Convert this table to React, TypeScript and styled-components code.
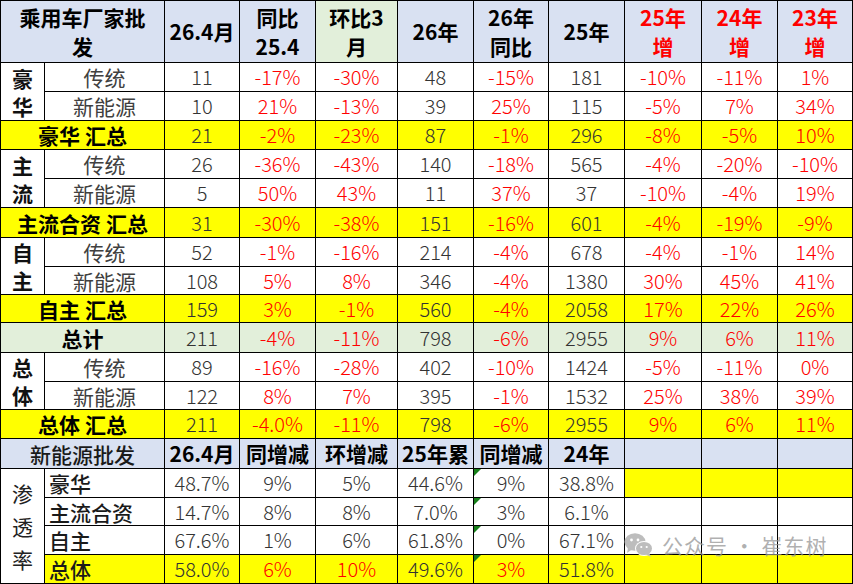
import React from "react";
import styled, { createGlobalStyle } from "styled-components";

const GlobalStyle = createGlobalStyle`
  body {
    margin: 0;
    background: #fff;
  }
`;

const FONT = `"Noto Sans CJK SC", "Noto Sans", sans-serif`;
const BLUE = "#d9e1f2";
const GREEN = "#e2efda";
const YELLOW = "#ffff00";
const RED = "#ff0000";
const INK = "#333333";

const Wrap = styled.div`
  position: relative;
  width: 853px;
  height: 584px;
  overflow: hidden;
`;

const Table = styled.table`
  border-collapse: collapse;
  table-layout: fixed;
  width: 851px;
  font-family: ${FONT};
`;

const Col = styled.col<{ $w: number }>`
  width: ${(p) => p.$w}px;
`;

const Row = styled.tr<{ $h: number; $bg?: string }>`
  height: ${(p) => p.$h}px;
  background: ${(p) => p.$bg || "#fff"};
`;

const Cell = styled.td<{
  $bg?: string;
  $color?: string;
  $align?: string;
}>`
  position: relative;
  border: 1px solid #000;
  padding: 0;
  text-align: ${(p) => p.$align || "center"};
  vertical-align: middle;
  background: ${(p) => p.$bg || "transparent"};
  color: ${(p) => p.$color || INK};
  font-size: 20px;
  font-weight: 300;
  line-height: 22px;
  white-space: nowrap;
  overflow: hidden;
`;

const HeadCell = styled(Cell)`
  font-size: 21px;
  font-weight: 700;
  line-height: 29px;
  color: ${(p) => p.$color || "#000"};
`;

const LabelCell = styled(Cell)`
  font-size: 21px;
  font-weight: 400;
  color: ${(p) => p.$color || "#404040"};
`;

const SubHead = styled(Cell)`
  font-size: 21px;
  font-weight: 500;
  color: #1a1a1a;
`;

const GroupCell = styled(Cell)`
  font-size: 21px;
  font-weight: 700;
  color: #111;
  line-height: 28px;
  white-space: normal;
`;

const SumLabel = styled(Cell)`
  font-size: 21px;
  font-weight: 700;
  color: #000;
`;

const PenLabel = styled(Cell)`
  font-size: 21px;
  font-weight: 500;
  color: #1a1a1a;
  padding-left: 4px;
`;

const VerticalLabel = styled(Cell)`
  font-size: 21px;
  font-weight: 400;
  color: #222;
  line-height: 33px;
  white-space: normal;
`;

const Flag = styled.span`
  position: absolute;
  left: 0;
  top: 0;
  width: 0;
  height: 0;
  border-top: 7px solid #17801a;
  border-right: 7px solid transparent;
`;

const Watermark = styled.div`
  position: absolute;
  left: 624px;
  top: 530px;
  display: flex;
  align-items: center;
  gap: 8px;
  color: rgba(150, 150, 150, 0.75);
  font-family: ${FONT};
  font-size: 21px;
  letter-spacing: 1px;
  pointer-events: none;
`;

const widths = [44, 120, 75, 76, 82, 76, 75, 76, 77, 76, 75];
const heights = [62, 29, 29, 29, 29, 29, 30, 29, 28, 28, 30, 29, 28, 29, 29, 29, 28, 29, 29];
const redCols = [2, 3, 5, 7, 8, 9];

type Line = string[];
interface Group {
  name: string;
  items: Line[];
  total: Line;
}

const groups: Group[] = [
  {
    name: "豪华",
    items: [
      ["传统", "11", "-17%", "-30%", "48", "-15%", "181", "-10%", "-11%", "1%"],
      ["新能源", "10", "21%", "-13%", "39", "25%", "115", "-5%", "7%", "34%"],
    ],
    total: ["豪华 汇总", "21", "-2%", "-23%", "87", "-1%", "296", "-8%", "-5%", "10%"],
  },
  {
    name: "主流",
    items: [
      ["传统", "26", "-36%", "-43%", "140", "-18%", "565", "-4%", "-20%", "-10%"],
      ["新能源", "5", "50%", "43%", "11", "37%", "37", "-10%", "-4%", "19%"],
    ],
    total: ["主流合资 汇总", "31", "-30%", "-38%", "151", "-16%", "601", "-4%", "-19%", "-9%"],
  },
  {
    name: "自主",
    items: [
      ["传统", "52", "-1%", "-16%", "214", "-4%", "678", "-4%", "-1%", "14%"],
      ["新能源", "108", "5%", "8%", "346", "-4%", "1380", "30%", "45%", "41%"],
    ],
    total: ["自主 汇总", "159", "3%", "-1%", "560", "-4%", "2058", "17%", "22%", "26%"],
  },
];

const grandTotal: Line = ["总计", "211", "-4%", "-11%", "798", "-6%", "2955", "9%", "6%", "11%"];

const overall: Group = {
  name: "总体",
  items: [
    ["传统", "89", "-16%", "-28%", "402", "-10%", "1424", "-5%", "-11%", "0%"],
    ["新能源", "122", "8%", "7%", "395", "-1%", "1532", "25%", "38%", "39%"],
  ],
  total: ["总体 汇总", "211", "-4.0%", "-11%", "798", "-6%", "2955", "9%", "6%", "11%"],
};

const penRows = [
  { name: "豪华", vals: ["48.7%", "9%", "5%", "44.6%", "9%", "38.8%"], fill: true, red: false },
  { name: "主流合资", vals: ["14.7%", "8%", "8%", "7.0%", "3%", "6.1%"], fill: false, red: false },
  { name: "自主", vals: ["67.6%", "1%", "6%", "61.8%", "0%", "67.1%"], fill: false, red: false },
  { name: "总体", vals: ["58.0%", "6%", "10%", "49.6%", "3%", "51.8%"], fill: true, red: true },
];

const numColor = (i: number) => (redCols.includes(i) ? RED : INK);

const Values = ({ line }: { line: Line }) => (
  <>
    {line.slice(1).map((v, i) => (
      <Cell key={i} $color={numColor(i + 1)}>
        {v}
      </Cell>
    ))}
  </>
);

const WeChatIcon = () => (
  <svg width="30" height="26" viewBox="0 0 30 26">
    <ellipse cx="11" cy="10" rx="10.5" ry="8.8" fill="#bdbdbd" />
    <path d="M4 16 L3 21 L8 17.5 Z" fill="#bdbdbd" />
    <ellipse cx="20" cy="16.5" rx="9" ry="7.5" fill="#fff" />
    <ellipse cx="20" cy="16.5" rx="8" ry="6.6" fill="#bdbdbd" />
    <path d="M25 21 L27 25 L22 22.5 Z" fill="#bdbdbd" />
    <circle cx="7.5" cy="8" r="1.4" fill="#fff" />
    <circle cx="14" cy="8" r="1.4" fill="#fff" />
    <circle cx="17.3" cy="15" r="1.1" fill="#fff" />
    <circle cx="22.7" cy="15" r="1.1" fill="#fff" />
  </svg>
);

const App = (): JSX.Element => {
  let r = 0;
  const nextH = () => heights[r++];

  const renderGroup = (g: Group) => (
    <React.Fragment key={g.name}>
      {g.items.map((line, i) => (
        <Row key={line[0]} $h={nextH()}>
          {i === 0 && (
            <GroupCell rowSpan={2}>
              {g.name[0]}
              <br />
              {g.name[1]}
            </GroupCell>
          )}
          <LabelCell>{line[0]}</LabelCell>
          <Values line={line} />
        </Row>
      ))}
      <Row $h={nextH()} $bg={YELLOW}>
        <SumLabel colSpan={2}>{g.total[0]}</SumLabel>
        <Values line={g.total} />
      </Row>
    </React.Fragment>
  );

  return (
    <Wrap>
      <GlobalStyle />
      <Table>
        <colgroup>
          {widths.map((w, i) => (
            <Col key={i} $w={w} />
          ))}
        </colgroup>
        <tbody>
          <Row $h={nextH()} $bg={BLUE}>
            <HeadCell colSpan={2}>
              乘用车厂家批
              <br />
              发
            </HeadCell>
            <HeadCell>26.4月</HeadCell>
            <HeadCell>
              同比
              <br />
              25.4
            </HeadCell>
            <HeadCell $bg={GREEN}>
              环比3
              <br />月
            </HeadCell>
            <HeadCell>26年</HeadCell>
            <HeadCell>
              26年
              <br />
              同比
            </HeadCell>
            <HeadCell>25年</HeadCell>
            <HeadCell $color={RED}>
              25年
              <br />增
            </HeadCell>
            <HeadCell $color={RED}>
              24年
              <br />增
            </HeadCell>
            <HeadCell $color={RED}>
              23年
              <br />增
            </HeadCell>
          </Row>
          {groups.map(renderGroup)}
          <Row $h={nextH()} $bg={GREEN}>
            <SumLabel colSpan={2}>{grandTotal[0]}</SumLabel>
            <Values line={grandTotal} />
          </Row>
          {renderGroup(overall)}
          <Row $h={nextH()} $bg={BLUE}>
            <SubHead colSpan={2}>新能源批发</SubHead>
            <HeadCell>26.4月</HeadCell>
            <HeadCell>同增减</HeadCell>
            <HeadCell>环增减</HeadCell>
            <HeadCell>25年累</HeadCell>
            <HeadCell>同增减</HeadCell>
            <HeadCell>24年</HeadCell>
            <HeadCell />
            <HeadCell />
            <HeadCell />
          </Row>
          {penRows.map((p, i) => (
            <Row key={p.name} $h={nextH()}>
              {i === 0 && (
                <VerticalLabel rowSpan={4}>
                  渗<br />透<br />率
                </VerticalLabel>
              )}
              <PenLabel $align="left" $bg={i === 3 ? YELLOW : undefined}>
                {p.name}
              </PenLabel>
              {p.vals.map((v, j) => (
                <Cell
                  key={j}
                  $bg={i === 3 ? YELLOW : undefined}
                  $color={p.red && [1, 2, 4].includes(j) ? RED : INK}
                >
                  {j === 4 && <Flag />}
                  {v}
                </Cell>
              ))}
              {[0, 1, 2].map((k) => (
                <Cell key={`e${k}`} $bg={p.fill ? YELLOW : undefined} />
              ))}
            </Row>
          ))}
        </tbody>
      </Table>
      <Watermark>
        <WeChatIcon />
        <span>公众号 · 崔东树</span>
      </Watermark>
    </Wrap>
  );
};

export default App;
